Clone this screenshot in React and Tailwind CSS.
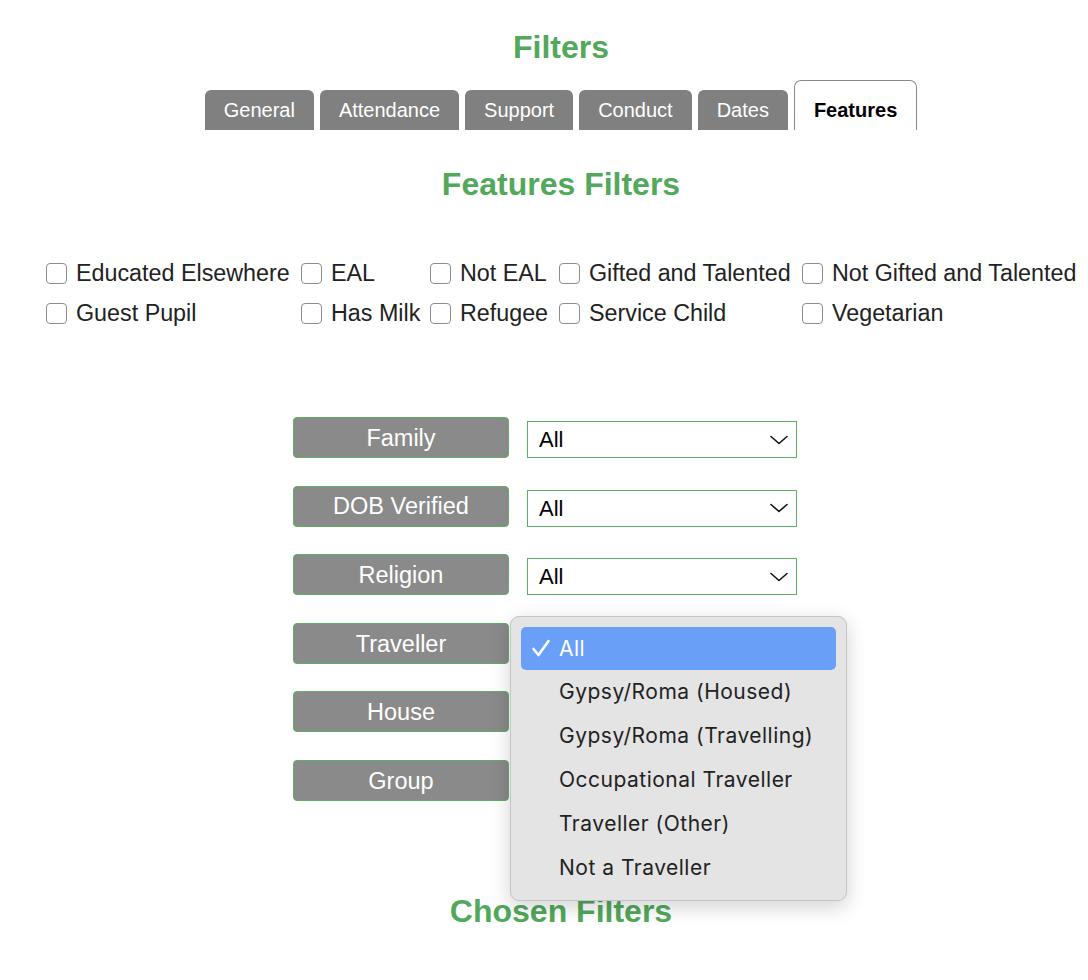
const tabs = ["General", "Attendance", "Support", "Conduct", "Dates"];

const checks = [
  "Educated Elsewhere",
  "EAL",
  "Not EAL",
  "Gifted and Talented",
  "Not Gifted and Talented",
  "Guest Pupil",
  "Has Milk",
  "Refugee",
  "Service Child",
  "Vegetarian",
];

const rows = ["Family", "DOB Verified", "Religion", "Traveller", "House", "Group"];

const travellerOptions = [
  "Gypsy/Roma (Housed)",
  "Gypsy/Roma (Travelling)",
  "Occupational Traveller",
  "Traveller (Other)",
  "Not a Traveller",
];

function Chevron() {
  return (
    <svg width="18" height="10" viewBox="0 0 18 10" fill="none" className="shrink-0">
      <path d="M1 1.5 L9 8.5 L17 1.5" stroke="#111" strokeWidth="1.6" strokeLinecap="round" strokeLinejoin="round" />
    </svg>
  );
}

function Check() {
  return (
    <svg width="20" height="20" viewBox="0 0 20 20" fill="none">
      <path d="M2.5 11 L7.5 17 L17.5 3" stroke="#fff" strokeWidth="2.6" strokeLinecap="round" strokeLinejoin="round" />
    </svg>
  );
}

function TravellerMenu() {
  return (
    <div className="absolute left-[-17px] top-[-11px] z-10 w-[337px] rounded-[9px] border border-[#c4c4c4] bg-[#e4e4e4] p-[10px] shadow-[0_6px_20px_rgba(0,0,0,0.18)] font-['Inter',sans-serif] text-[21px] tracking-[0.5px] text-[#222]">
      <div className="flex h-[43px] items-center rounded-[5px] bg-[#6a9ff7] pl-[10px] text-white">
        <Check />
        <span className="ml-[8px]">All</span>
      </div>
      {travellerOptions.map((o) => (
        <div key={o} className="flex h-[44px] items-center pl-[38px]">
          {o}
        </div>
      ))}
    </div>
  );
}

export default function App() {
  return (
    <div className="min-h-[980px] bg-white pl-[34px] font-['Liberation_Sans',Arial,sans-serif]">
      <h1 className="pt-[29px] text-center text-[32px] font-bold leading-[37px] text-[#52a85b]">Filters</h1>

      <div className="mt-[14px] flex items-end justify-center gap-[6px]">
        {tabs.map((t) => (
          <div key={t} className="flex h-[40px] items-center rounded-t-[6px] bg-[#808080] px-[19px] text-[20px] text-white">
            {t}
          </div>
        ))}
        <div className="flex h-[50px] items-center rounded-t-[7px] border border-b-0 border-[#8a8a8a] bg-white px-[19px] pt-[8px] text-[20px] font-bold text-black">
          Features
        </div>
      </div>

      <h2 className="mt-[36px] text-center text-[32px] font-bold leading-[37px] text-[#52a85b]">Features Filters</h2>

      <div className="ml-[12px] mt-[50px] grid grid-cols-[255px_129px_129px_243px_auto] text-[23.3px] text-[#222]">
        {checks.map((c) => (
          <label key={c} className="flex h-[40px] items-center gap-[9px] whitespace-nowrap">
            <span className="h-[21px] w-[21px] shrink-0 rounded-[4px] border border-[#8d8d8d] bg-white" />
            <span>{c}</span>
          </label>
        ))}
      </div>

      <div className="ml-[259px] mt-[84px] flex flex-col gap-[27.6px]">
        {rows.map((r) => (
          <div key={r} className="flex items-end gap-[18px]">
            <div className="flex h-[41px] w-[216px] items-center justify-center rounded-[4px] border border-[#5cb063] bg-[#8a8a8a] pt-[2px] text-[23.5px] text-white">
              {r}
            </div>
            <div className="relative">
              <div className="flex h-[37px] w-[270px] items-center justify-between border border-[#5cb063] bg-white pl-[11px] pr-[8px] text-[22px] text-black">
                <span>All</span>
                <Chevron />
              </div>
              {r === "Traveller" && <TravellerMenu />}
            </div>
          </div>
        ))}
      </div>

      <h2 className="mt-[92px] text-center text-[32px] font-bold leading-[37px] text-[#52a85b]">Chosen Filters</h2>
    </div>
  );
}
